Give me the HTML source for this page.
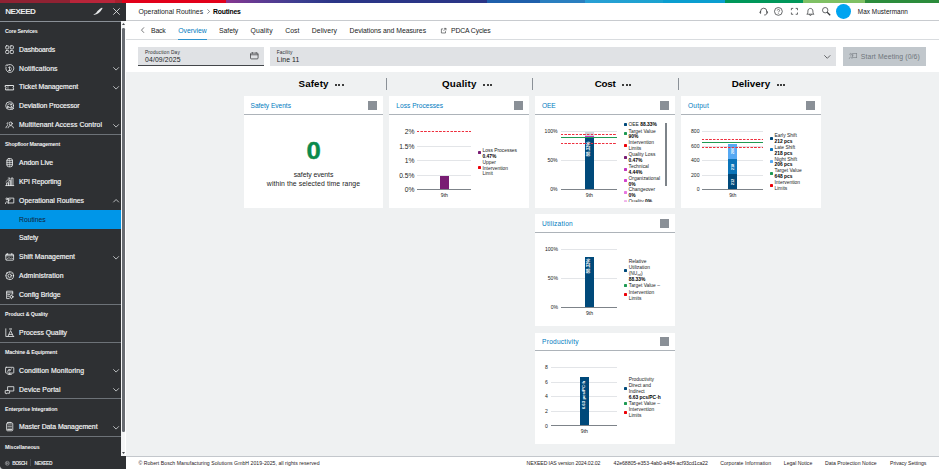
<!DOCTYPE html>
<html lang="en"><head><meta charset="utf-8"><title>Operational Routines - Routines</title>
<style>
html,body{margin:0;padding:0;}
body{width:939px;height:469px;overflow:hidden;position:relative;background:#fff;font-family:"Liberation Sans",sans-serif;-webkit-font-smoothing:antialiased;}
svg{overflow:visible;}
</style></head><body>
<div style="position:absolute;left:125.50px;top:71.75px;width:813.50px;height:384.50px;background:#eff1f2;"></div>
<div style="position:absolute;left:125.50px;top:20.20px;width:813.50px;height:0.90px;background:#c8cbcf;"></div>
<div style="position:absolute;left:125.50px;top:39.30px;width:813.50px;height:0.90px;background:#d9dcdf;"></div>
<div style="position:absolute;left:125.50px;top:456.10px;width:813.50px;height:0.80px;background:#c3c7cc;"></div>
<div style="position:absolute;left:0;top:0;width:939px;height:2.5px;background:linear-gradient(90deg,#8f2233 0,#8f2233 70px,#b8253a 70px,#b8253a 115px,#a81f2e 115px,#a81f2e 122px,#e2001a 122px,#e2001a 226px,#87368f 226px,#5d3b93 262px,#3b3e90 300px,#2a3587 335px,#2a3587 487px,#1f5fab 487px,#1f5fab 540px,#2a7fc0 540px,#2a7fc0 585px,#2a9fd5 585px,#1aa3d0 663px,#0b9ed0 663px,#0b9ed0 725px,#00975a 725px,#00975a 803px,#7fc064 803px,#7fc064 865px,#2c8c3c 865px,#2c8c3c 939px)"></div>
<aside aria-label="Sidebar">
<div style="position:absolute;left:0.00px;top:2.50px;width:125.70px;height:18.30px;background:#2e3033;"></div>
<div style="position:absolute;left:0.00px;top:20.80px;width:120.70px;height:435.20px;background:#2e3033;"></div>
<div style="position:absolute;left:0.00px;top:455.70px;width:125.50px;height:13.30px;background:#2e3033;"></div>
<div style="position:absolute;left:0.00px;top:20.70px;width:120.70px;height:0.80px;background:#8a9097;"></div>
<div style="position:absolute;left:120.70px;top:20.80px;width:4.80px;height:435.00px;background:#f4f5f6;"></div>
<div style="position:absolute;left:122.10px;top:28.20px;width:2.50px;height:404.00px;background:#686c72;border-radius:1.25px;"></div>
<svg style="position:absolute;left:121.60px;top:23.30px;" width="3" height="2" viewBox="0 0 3 2"><path d="M0 2 L1.5 0 L3 2 Z" fill="#43464a"/></svg>
<svg style="position:absolute;left:121.60px;top:451.50px;" width="3" height="2" viewBox="0 0 3 2"><path d="M0 0 L1.5 2 L3 0 Z" fill="#43464a"/></svg>
<span style="position:absolute;left:5.30px;top:6.64px;font-size:8.1px;line-height:9.72px;color:#e9ebec;white-space:nowrap;font-weight:bold;letter-spacing:-0.552px;">NEXEED</span>
<nav aria-label="Main navigation">
<svg style="position:absolute;left:92.80px;top:7.20px;" width="10" height="8.6" viewBox="0 0 10 8.6"><path d="M.3 7.4 C1.6 7.9 3.6 7.6 5 6.6 C6.8 5.3 8.6 3.4 9.4 1.6 C9.7 .9 9.1 .5 8.4 .9 C6.6 1.9 4.6 3.6 3.6 5.2 C3 6.2 2 6.9 .3 7.4 Z" fill="#e6e8ea"/></svg>
<svg style="position:absolute;left:112.90px;top:8.00px;" width="7.0" height="7.0" viewBox="0 0 7.0 7.0"><path d="M.3 .3 L6.7 6.7 M6.7 .3 L.3 6.7" stroke="#e6e8ea" stroke-width=".85" fill="none"/></svg>
<span style="position:absolute;left:5.00px;top:28.14px;font-size:5.3px;line-height:6.36px;color:#f2f3f4;white-space:nowrap;font-weight:bold;letter-spacing:-0.220px;">Core Services</span>
<span style="position:absolute;left:19.10px;top:45.69px;font-size:6.85px;line-height:8.22px;color:#f4f5f6;white-space:nowrap;letter-spacing:-0.094px;-webkit-text-stroke:0.18px #f4f5f6;">Dashboards</span>
<svg style="position:absolute;left:4.70px;top:44.80px;" width="9.4" height="9.4" viewBox="0 0 9.4 9.4"><g stroke="#eef0f1" stroke-width=".8" fill="none" stroke-linecap="round" stroke-linejoin="round"><rect x=".7" y=".8" width="3.1" height="3.1" rx=".7"/><rect x="5.3" y=".8" width="3.1" height="3.1" rx=".7"/><rect x=".7" y="5.4" width="3.1" height="3.1" rx=".7"/><rect x="5.3" y="5.4" width="3.1" height="3.1" rx=".7"/></g></svg>
<span style="position:absolute;left:19.10px;top:64.57px;font-size:6.85px;line-height:8.22px;color:#f4f5f6;white-space:nowrap;letter-spacing:0.091px;-webkit-text-stroke:0.18px #f4f5f6;">Notifications</span>
<svg style="position:absolute;left:4.70px;top:63.68px;" width="9.4" height="9.4" viewBox="0 0 9.4 9.4"><g stroke="#eef0f1" stroke-width=".8" fill="none" stroke-linecap="round" stroke-linejoin="round"><path d="M2.3 1.3 A4 4 0 1 1 1 3.2"/><path d="M.6 1.9 A2 2 0 0 1 2 .6"/><path d="M3.6 3.4 L4.5 2.8 V6.6 M3.6 6.6 H5.4"/><path d="M5.2 2.9 C6.9 3.2 6.9 6.2 5.6 6.6" stroke-width=".55"/></g></svg>
<svg style="position:absolute;left:112.60px;top:67.28px;" width="6.2" height="3.6" viewBox="0 0 6.2 3.6"><path d="M.3 .3 L3.1 3.1 L5.9 .3" stroke="#e6e8ea" stroke-width=".75" fill="none"/></svg>
<span style="position:absolute;left:19.10px;top:83.45px;font-size:6.85px;line-height:8.22px;color:#f4f5f6;white-space:nowrap;letter-spacing:-0.053px;-webkit-text-stroke:0.18px #f4f5f6;">Ticket Management</span>
<svg style="position:absolute;left:4.70px;top:82.56px;" width="9.4" height="9.4" viewBox="0 0 9.4 9.4"><g stroke="#eef0f1" stroke-width=".95" fill="none" stroke-linecap="round" stroke-linejoin="round"><path d="M.6 2.5 H8.6 V4 C7.8 4 7.8 5.4 8.6 5.4 V6.9 H.6 V5.4 C1.4 5.4 1.4 4 .6 4 Z"/><path d="M3 2.7 V3.4 M3 4.3 V5.1 M3 6 V6.7" stroke-width=".55"/></g></svg>
<svg style="position:absolute;left:112.60px;top:86.16px;" width="6.2" height="3.6" viewBox="0 0 6.2 3.6"><path d="M.3 .3 L3.1 3.1 L5.9 .3" stroke="#e6e8ea" stroke-width=".75" fill="none"/></svg>
<span style="position:absolute;left:19.10px;top:102.33px;font-size:6.85px;line-height:8.22px;color:#f4f5f6;white-space:nowrap;letter-spacing:-0.042px;-webkit-text-stroke:0.18px #f4f5f6;">Deviation Processor</span>
<svg style="position:absolute;left:4.70px;top:101.44px;" width="9.4" height="9.4" viewBox="0 0 9.4 9.4"><g stroke="#eef0f1" stroke-width=".8" fill="none" stroke-linecap="round" stroke-linejoin="round"><circle cx="4.6" cy="4.7" r="3.9"/><path d="M2.4 4.2 C2.9 2.6 5.6 2.2 6.6 3.8 M6.7 2.6 V3.9 H5.4"/><path d="M6.8 5.3 C6.3 6.9 3.6 7.2 2.6 5.7 M2.5 6.9 V5.6 H3.8"/><circle cx="7.2" cy="7.4" r="1.1" fill="#2e3033"/></g></svg>
<span style="position:absolute;left:19.10px;top:121.21px;font-size:6.85px;line-height:8.22px;color:#f4f5f6;white-space:nowrap;letter-spacing:0.073px;-webkit-text-stroke:0.18px #f4f5f6;">Multitenant Access Control</span>
<svg style="position:absolute;left:4.70px;top:120.32px;" width="9.4" height="9.4" viewBox="0 0 9.4 9.4"><g stroke="#eef0f1" stroke-width=".8" fill="none" stroke-linecap="round" stroke-linejoin="round"><circle cx="5.7" cy="3.6" r="1.55"/><path d="M3.1 7.8 C3.1 4.8 8.4 4.8 8.4 7.8"/><path d="M2.9 2.5 C1.8 2.7 1.7 4.1 2.7 4.5 M1 7.8 C1 6.5 1.6 5.8 2.6 5.6"/></g></svg>
<svg style="position:absolute;left:112.60px;top:123.92px;" width="6.2" height="3.6" viewBox="0 0 6.2 3.6"><path d="M.3 .3 L3.1 3.1 L5.9 .3" stroke="#e6e8ea" stroke-width=".75" fill="none"/></svg>
<div style="position:absolute;left:0.00px;top:134.16px;width:120.70px;height:0.80px;background:#6d7278;"></div>
<span style="position:absolute;left:5.00px;top:141.42px;font-size:5.3px;line-height:6.36px;color:#f2f3f4;white-space:nowrap;font-weight:bold;letter-spacing:-0.195px;">Shopfloor Management</span>
<span style="position:absolute;left:19.10px;top:158.97px;font-size:6.85px;line-height:8.22px;color:#f4f5f6;white-space:nowrap;letter-spacing:-0.028px;-webkit-text-stroke:0.18px #f4f5f6;">Andon Live</span>
<svg style="position:absolute;left:4.70px;top:158.08px;" width="9.4" height="9.4" viewBox="0 0 9.4 9.4"><g stroke="#eef0f1" stroke-width=".8" fill="none" stroke-linecap="round" stroke-linejoin="round"><rect x="1.9" y=".6" width="5.6" height="8.2" rx="1.9"/><path d="M1.9 2.7 H7.5 M1.9 4.7 H7.5 M1.9 6.7 H7.5"/><path d="M4.7 .7 V8.7" stroke-width=".5"/></g></svg>
<span style="position:absolute;left:19.10px;top:177.85px;font-size:6.85px;line-height:8.22px;color:#f4f5f6;white-space:nowrap;letter-spacing:-0.050px;-webkit-text-stroke:0.18px #f4f5f6;">KPI Reporting</span>
<svg style="position:absolute;left:4.70px;top:176.96px;" width="9.4" height="9.4" viewBox="0 0 9.4 9.4"><g stroke="#eef0f1" stroke-width=".8" fill="none" stroke-linecap="round" stroke-linejoin="round"><path d="M.7 8.6 H8.8"/><path d="M1.6 8.6 V5.9 H3.4 V8.6 M3.9 8.6 V3.6 H5.7 V8.6 M6.2 8.6 V1 H8 V8.6"/><path d="M.9 4.6 L4.6 1.2 M3.2 1 H4.8 V2.6" stroke-width=".6"/></g></svg>
<span style="position:absolute;left:19.10px;top:196.73px;font-size:6.85px;line-height:8.22px;color:#f4f5f6;white-space:nowrap;letter-spacing:0.032px;-webkit-text-stroke:0.18px #f4f5f6;">Operational Routines</span>
<svg style="position:absolute;left:4.70px;top:195.84px;" width="9.4" height="9.4" viewBox="0 0 9.4 9.4"><g stroke="#eef0f1" stroke-width=".8" fill="none" stroke-linecap="round" stroke-linejoin="round"><rect x="4" y="2.1" width="4.8" height="4.9"/><circle cx="1.9" cy="2.9" r=".95"/><path d="M.5 7.6 C.5 5 3.3 5 3.3 7.6 M3 4.8 L5.2 3.6"/></g></svg>
<svg style="position:absolute;left:112.60px;top:199.04px;" width="6.2" height="3.6" viewBox="0 0 6.2 3.6"><path d="M.3 3.3 L3.1 .5 L5.9 3.3" stroke="#e6e8ea" stroke-width=".75" fill="none"/></svg>
<div style="position:absolute;left:0.00px;top:209.78px;width:120.70px;height:18.88px;background:#0096e8;"></div>
<span style="position:absolute;left:19.10px;top:215.61px;font-size:6.85px;line-height:8.22px;color:#10253a;white-space:nowrap;letter-spacing:-0.067px;">Routines</span>
<span style="position:absolute;left:19.10px;top:234.49px;font-size:6.85px;line-height:8.22px;color:#f4f5f6;white-space:nowrap;letter-spacing:-0.070px;-webkit-text-stroke:0.18px #f4f5f6;">Safety</span>
<span style="position:absolute;left:19.10px;top:253.37px;font-size:6.85px;line-height:8.22px;color:#f4f5f6;white-space:nowrap;letter-spacing:0.025px;-webkit-text-stroke:0.18px #f4f5f6;">Shift Management</span>
<svg style="position:absolute;left:4.70px;top:252.48px;" width="9.4" height="9.4" viewBox="0 0 9.4 9.4"><g stroke="#eef0f1" stroke-width=".8" fill="none" stroke-linecap="round" stroke-linejoin="round"><rect x=".8" y="2.3" width="7.8" height="5.9" rx=".5"/><path d="M.8 3.8 H8.6 M2.6 1.5 V2.6 M6.8 1.5 V2.6"/><path d="M1.5 7.5 C2.6 5.4 4.6 5.6 5.6 6.6 C6.4 5.8 7.6 6 8.1 7" stroke-width=".6"/></g></svg>
<svg style="position:absolute;left:112.60px;top:256.08px;" width="6.2" height="3.6" viewBox="0 0 6.2 3.6"><path d="M.3 .3 L3.1 3.1 L5.9 .3" stroke="#e6e8ea" stroke-width=".75" fill="none"/></svg>
<span style="position:absolute;left:19.10px;top:272.25px;font-size:6.85px;line-height:8.22px;color:#f4f5f6;white-space:nowrap;letter-spacing:0.078px;-webkit-text-stroke:0.18px #f4f5f6;">Administration</span>
<svg style="position:absolute;left:4.70px;top:271.36px;" width="9.4" height="9.4" viewBox="0 0 9.4 9.4"><g stroke="#eef0f1" stroke-width=".8" fill="none" stroke-linecap="round" stroke-linejoin="round"><circle cx="4.7" cy="4.7" r="3.9"/><circle cx="4.7" cy="4.7" r="1.7"/><path d="M4.7 .8 V1.7 M4.7 7.7 V8.6 M.8 4.7 H1.7 M7.7 4.7 H8.6 M1.95 1.95 L2.6 2.6 M6.8 6.8 L7.45 7.45 M1.95 7.45 L2.6 6.8 M6.8 2.6 L7.45 1.95" stroke-width=".55"/></g></svg>
<span style="position:absolute;left:19.10px;top:291.13px;font-size:6.85px;line-height:8.22px;color:#f4f5f6;white-space:nowrap;-webkit-text-stroke:0.18px #f4f5f6;">Config Bridge</span>
<svg style="position:absolute;left:4.70px;top:290.24px;" width="9.4" height="9.4" viewBox="0 0 9.4 9.4"><g stroke="#eef0f1" stroke-width=".8" fill="none" stroke-linecap="round" stroke-linejoin="round"><path d="M7.7 4.2 V1.2 H1.6 V8.6 H4.2"/><path d="M1.6 2.9 H7.7 M2.7 4.6 H4.7 M2.7 6.2 H3.8" /><circle cx="6.5" cy="6.8" r="1.4"/><path d="M6.5 4.8 V5.4 M6.5 8.2 V8.8 M4.5 6.8 H5.1 M7.9 6.8 H8.5" stroke-width=".6"/></g></svg>
<div style="position:absolute;left:0.00px;top:304.08px;width:120.70px;height:0.80px;background:#6d7278;"></div>
<span style="position:absolute;left:5.00px;top:311.34px;font-size:5.3px;line-height:6.36px;color:#f2f3f4;white-space:nowrap;font-weight:bold;letter-spacing:-0.104px;">Product &amp; Quality</span>
<span style="position:absolute;left:19.10px;top:328.89px;font-size:6.85px;line-height:8.22px;color:#f4f5f6;white-space:nowrap;letter-spacing:0.002px;-webkit-text-stroke:0.18px #f4f5f6;">Process Quality</span>
<svg style="position:absolute;left:4.70px;top:328.00px;" width="9.4" height="9.4" viewBox="0 0 9.4 9.4"><g stroke="#eef0f1" stroke-width=".8" fill="none" stroke-linecap="round" stroke-linejoin="round"><path d="M.8 .8 V8.5 H8.8"/><path d="M3 8.4 L5.6 2.6 L8.3 8.4 M4 6.4 H7.2"/><path d="M4.6 1 H6.6" stroke-width=".9"/></g></svg>
<div style="position:absolute;left:0.00px;top:341.84px;width:120.70px;height:0.80px;background:#6d7278;"></div>
<span style="position:absolute;left:5.00px;top:349.10px;font-size:5.3px;line-height:6.36px;color:#f2f3f4;white-space:nowrap;font-weight:bold;letter-spacing:-0.177px;">Machine &amp; Equipment</span>
<span style="position:absolute;left:19.10px;top:366.65px;font-size:6.85px;line-height:8.22px;color:#f4f5f6;white-space:nowrap;letter-spacing:0.109px;-webkit-text-stroke:0.18px #f4f5f6;">Condition Monitoring</span>
<svg style="position:absolute;left:4.70px;top:365.76px;" width="9.4" height="9.4" viewBox="0 0 9.4 9.4"><g stroke="#eef0f1" stroke-width=".8" fill="none" stroke-linecap="round" stroke-linejoin="round"><rect x=".6" y="1.3" width="8.2" height="5.8" rx=".6"/><path d="M3 8.4 H6.4 M4.7 7.2 V8.3"/><path d="M2.6 5.6 L3.8 3.6 H5.4 L6.6 2.8" stroke-width=".6"/><circle cx="4.2" cy="4.4" r=".9" stroke-width=".5"/></g></svg>
<svg style="position:absolute;left:112.60px;top:369.36px;" width="6.2" height="3.6" viewBox="0 0 6.2 3.6"><path d="M.3 .3 L3.1 3.1 L5.9 .3" stroke="#e6e8ea" stroke-width=".75" fill="none"/></svg>
<span style="position:absolute;left:19.10px;top:385.53px;font-size:6.85px;line-height:8.22px;color:#f4f5f6;white-space:nowrap;letter-spacing:0.059px;-webkit-text-stroke:0.18px #f4f5f6;">Device Portal</span>
<svg style="position:absolute;left:4.70px;top:384.64px;" width="9.4" height="9.4" viewBox="0 0 9.4 9.4"><g stroke="#eef0f1" stroke-width=".8" fill="none" stroke-linecap="round" stroke-linejoin="round"><path d="M2.6 5.6 V1.7 H8.8 V6 H5.4"/><path d="M.6 5.6 H4.6 V8.2 H2.2 L1.2 8.9 V8.2 H.6 Z"/></g></svg>
<svg style="position:absolute;left:112.60px;top:388.24px;" width="6.2" height="3.6" viewBox="0 0 6.2 3.6"><path d="M.3 .3 L3.1 3.1 L5.9 .3" stroke="#e6e8ea" stroke-width=".75" fill="none"/></svg>
<div style="position:absolute;left:0.00px;top:398.48px;width:120.70px;height:0.80px;background:#6d7278;"></div>
<span style="position:absolute;left:5.00px;top:405.74px;font-size:5.3px;line-height:6.36px;color:#f2f3f4;white-space:nowrap;font-weight:bold;letter-spacing:-0.117px;">Enterprise Integration</span>
<span style="position:absolute;left:19.10px;top:423.29px;font-size:6.85px;line-height:8.22px;color:#f4f5f6;white-space:nowrap;letter-spacing:-0.032px;-webkit-text-stroke:0.18px #f4f5f6;">Master Data Management</span>
<svg style="position:absolute;left:4.70px;top:422.40px;" width="9.4" height="9.4" viewBox="0 0 9.4 9.4"><g stroke="#eef0f1" stroke-width=".8" fill="none" stroke-linecap="round" stroke-linejoin="round"><rect x="1.6" y=".9" width="6.2" height="7.9" rx="1"/><path d="M3.3 .9 V.4 H6.1 V.9"/><path d="M2.9 2.9 H6.5 M2.9 4.5 H6.5 M2.9 6.1 H6.5" stroke-width=".55"/><path d="M2.6 7.6 H6.8" stroke-width=".9"/></g></svg>
<svg style="position:absolute;left:112.60px;top:426.00px;" width="6.2" height="3.6" viewBox="0 0 6.2 3.6"><path d="M.3 .3 L3.1 3.1 L5.9 .3" stroke="#e6e8ea" stroke-width=".75" fill="none"/></svg>
<div style="position:absolute;left:0.00px;top:436.24px;width:120.70px;height:0.80px;background:#6d7278;"></div>
<span style="position:absolute;left:5.00px;top:443.50px;font-size:5.3px;line-height:6.36px;color:#f2f3f4;white-space:nowrap;font-weight:bold;letter-spacing:-0.133px;">Miscellaneous</span>
</nav>
<svg style="position:absolute;left:0.00px;top:466.20px;" width="3" height="2.8" viewBox="0 0 3 2.8"><path d="M0 0 Q.2 2.6 3 2.8 L0 2.8 Z" fill="#fff"/></svg>
<svg style="position:absolute;left:5.20px;top:460.60px;" width="4.6" height="4.6" viewBox="0 0 4.6 4.6"><circle cx="2.3" cy="2.3" r="2" stroke="#c9ccd0" stroke-width=".45" fill="none"/><path d="M1.5 1 V3.6 M3.1 1 V3.6 M1.5 2.3 H3.1" stroke="#c9ccd0" stroke-width=".45" fill="none"/></svg>
<span style="position:absolute;left:12.30px;top:460.56px;font-size:4.9px;line-height:5.88px;color:#e6e8ea;white-space:nowrap;font-weight:bold;letter-spacing:-0.659px;">BOSCH</span>
<div style="position:absolute;left:30.20px;top:459.30px;width:0.60px;height:6.80px;background:#4b4e53;"></div>
<span style="position:absolute;left:34.60px;top:460.56px;font-size:4.9px;line-height:5.88px;color:#e6e8ea;white-space:nowrap;font-weight:bold;letter-spacing:-0.459px;">NEXEED</span>
</aside>
<header>
<span style="position:absolute;left:138.40px;top:8.39px;font-size:6.85px;line-height:8.22px;color:#1a1c1d;white-space:nowrap;letter-spacing:0.022px;">Operational Routines</span>
<svg style="position:absolute;left:206.60px;top:9.30px;" width="3" height="5" viewBox="0 0 3 5"><path d="M.4 .4 L2.6 2.5 L.4 4.6" stroke="#43464a" stroke-width=".6" fill="none"/></svg>
<h1 style="position:absolute;left:213.00px;top:8.39px;font-size:6.85px;line-height:8.22px;color:#000;white-space:nowrap;font-weight:bold;letter-spacing:-0.213px;margin:0;font-weight:bold;">Routines</h1>
<svg style="position:absolute;left:758.60px;top:7.40px;" width="9.4" height="8.6" viewBox="0 0 9.4 8.6"><g stroke="#34373a" stroke-width=".75" fill="none"><path d="M1.6 5.2 V4.3 A3.1 3.1 0 0 1 7.8 4.3 V5.2"/><path d="M1.6 4.4 C.6 4.4 .6 6.4 1.6 6.4 Z M7.8 4.4 C8.8 4.4 8.8 6.4 7.8 6.4 Z"/><path d="M7.8 6.4 C7.8 7.6 6.6 8 5.2 8"/></g></svg>
<svg style="position:absolute;left:774.20px;top:7.20px;" width="8.8" height="8.8" viewBox="0 0 8.8 8.8"><g stroke="#34373a" stroke-width=".75" fill="none"><circle cx="4.4" cy="4.4" r="3.9"/><path d="M3.3 3.5 C3.3 2 5.6 2 5.6 3.5 C5.6 4.5 4.4 4.4 4.4 5.4" stroke-width=".65"/><path d="M4.4 6.1 V6.8" stroke-width=".65"/></g></svg>
<svg style="position:absolute;left:791.00px;top:8.30px;" width="6.9" height="6.7" viewBox="0 0 6.9 6.7"><g stroke="#34373a" stroke-width=".75" fill="none"><path d="M.4 2.2 V.4 H2.2 M4.7 .4 H6.5 V2.2 M6.5 4.5 V6.3 H4.7 M2.2 6.3 H.4 V4.5"/></g></svg>
<svg style="position:absolute;left:805.60px;top:7.00px;" width="8.8" height="9.2" viewBox="0 0 8.8 9.2"><g stroke="#34373a" stroke-width=".75" fill="none"><path d="M.8 7.2 H8 C6.9 6.3 6.9 5.4 6.9 4 C6.9 .6 1.9 .6 1.9 4 C1.9 5.4 1.9 6.3 .8 7.2 Z"/><path d="M3.4 7.4 C3.4 8.8 5.4 8.8 5.4 7.4"/></g></svg>
<svg style="position:absolute;left:821.60px;top:7.20px;" width="8.8" height="8.8" viewBox="0 0 8.8 8.8"><g stroke="#34373a" stroke-width=".75" fill="none"><circle cx="3.2" cy="3.2" r="2.7"/><path d="M5.2 5.2 L8.2 8.2" stroke-width="1.3"/></g></svg>
<div style="position:absolute;left:835.8px;top:4.0px;width:14.8px;height:14.8px;border-radius:50%;background:#00a4f0"></div>
<span style="position:absolute;left:857.80px;top:7.56px;font-size:6.4px;line-height:7.68px;color:#101112;white-space:nowrap;letter-spacing:0.054px;">Max Mustermann</span>
</header>
<nav aria-label="Tabs">
<svg style="position:absolute;left:141.20px;top:27.40px;" width="3.4" height="6.2" viewBox="0 0 3.4 6.2"><path d="M3 .4 L.5 3.1 L3 5.8" stroke="#2e3033" stroke-width=".65" fill="none"/></svg>
<span style="position:absolute;left:151.00px;top:27.19px;font-size:6.85px;line-height:8.22px;color:#1a1c1d;white-space:nowrap;letter-spacing:-0.157px;">Back</span>
<span style="position:absolute;left:178.20px;top:27.19px;font-size:6.85px;line-height:8.22px;color:#007bc0;white-space:nowrap;letter-spacing:-0.006px;">Overview</span>
<div style="position:absolute;left:178.20px;top:38.75px;width:28.40px;height:0.95px;background:#2f93cd;"></div>
<span style="position:absolute;left:219.00px;top:27.19px;font-size:6.85px;line-height:8.22px;color:#1a1c1d;white-space:nowrap;letter-spacing:-0.037px;">Safety</span>
<span style="position:absolute;left:250.50px;top:27.19px;font-size:6.85px;line-height:8.22px;color:#1a1c1d;white-space:nowrap;letter-spacing:0.126px;">Quality</span>
<span style="position:absolute;left:285.20px;top:27.19px;font-size:6.85px;line-height:8.22px;color:#1a1c1d;white-space:nowrap;letter-spacing:0.029px;">Cost</span>
<span style="position:absolute;left:311.80px;top:27.19px;font-size:6.85px;line-height:8.22px;color:#1a1c1d;white-space:nowrap;letter-spacing:0.057px;">Delivery</span>
<span style="position:absolute;left:349.50px;top:27.19px;font-size:6.85px;line-height:8.22px;color:#1a1c1d;white-space:nowrap;letter-spacing:-0.030px;">Deviations and Measures</span>
<svg style="position:absolute;left:440.60px;top:27.60px;" width="5.4" height="5.4" viewBox="0 0 5.4 5.4"><g stroke="#2e3033" stroke-width=".6" fill="none"><path d="M2.2 .9 H.4 V5 H4.5 V3.2"/><path d="M3 .4 H5 V2.4 M5 .4 L2.6 2.8"/></g></svg>
<span style="position:absolute;left:451.00px;top:27.19px;font-size:6.85px;line-height:8.22px;color:#1a1c1d;white-space:nowrap;letter-spacing:-0.137px;">PDCA Cycles</span>
</nav>
<main>
<div role="toolbar">
<div style="position:absolute;left:138.40px;top:46.90px;width:125.80px;height:18.70px;background:#e0e2e5;"></div>
<div style="position:absolute;left:138.40px;top:65.00px;width:125.80px;height:0.80px;background:#43464a;"></div>
<span style="position:absolute;left:145.00px;top:49.92px;font-size:4.8px;line-height:5.76px;color:#2e3033;white-space:nowrap;letter-spacing:0.156px;">Production Day</span>
<span style="position:absolute;left:145.00px;top:56.09px;font-size:6.85px;line-height:8.22px;color:#1a1c1d;white-space:nowrap;letter-spacing:0.132px;">04/09/2025</span>
<svg style="position:absolute;left:250.40px;top:52.20px;" width="8.6" height="7.4" viewBox="0 0 8.6 7.4"><g stroke="#2e3033" stroke-width=".7" fill="none"><rect x=".5" y="1.1" width="7.6" height="5.8" rx=".9"/><path d="M.5 2.8 H8.1 M2.4 .2 V1.6 M6.2 .2 V1.6"/></g></svg>
<div style="position:absolute;left:270.20px;top:46.90px;width:565.80px;height:18.70px;background:#e0e2e5;"></div>
<span style="position:absolute;left:276.80px;top:49.92px;font-size:4.8px;line-height:5.76px;color:#2e3033;white-space:nowrap;letter-spacing:0.083px;">Facility</span>
<span style="position:absolute;left:276.80px;top:56.09px;font-size:6.85px;line-height:8.22px;color:#1a1c1d;white-space:nowrap;letter-spacing:0.091px;">Line 11</span>
<svg style="position:absolute;left:823.60px;top:55.00px;" width="6.6" height="3.8" viewBox="0 0 6.6 3.8"><path d="M.3 .3 L3.3 3.3 L6.3 .3" stroke="#2e3033" stroke-width=".7" fill="none"/></svg>
<div style="position:absolute;left:843.00px;top:46.90px;width:83.20px;height:18.70px;background:#c1c7cc;"></div>
<svg style="position:absolute;left:848.80px;top:53.20px;" width="8.0" height="6.2" viewBox="0 0 8.0 6.2"><g stroke="#7d8389" stroke-width=".65" fill="none"><rect x="3.7" y=".5" width="4" height="4.2"/><circle cx="1.7" cy="1.3" r=".9"/><path d="M.3 5.9 C.3 3.5 3 3.5 3 5.9 M2.7 3.1 L4.6 2.1"/></g></svg>
<span style="position:absolute;left:860.80px;top:53.09px;font-size:6.85px;line-height:8.22px;color:#6f757b;white-space:nowrap;letter-spacing:0.130px;">Start Meeting (0/6)</span>
</div>
<h2 style="position:absolute;left:298.55px;top:77.92px;font-size:9.8px;line-height:11.76px;color:#000;white-space:nowrap;font-weight:bold;letter-spacing:0.097px;margin:0;font-weight:bold;">Safety</h2>
<div style="position:absolute;left:335.15px;top:83.60px;width:2.00px;height:2.00px;background:#000;border-radius:50%;"></div>
<div style="position:absolute;left:338.45px;top:83.60px;width:2.00px;height:2.00px;background:#000;border-radius:50%;"></div>
<div style="position:absolute;left:341.75px;top:83.60px;width:2.00px;height:2.00px;background:#000;border-radius:50%;"></div>
<div style="position:absolute;left:386.15px;top:78.20px;width:0.70px;height:11.60px;background:#8a9097;"></div>
<h2 style="position:absolute;left:442.05px;top:77.92px;font-size:9.8px;line-height:11.76px;color:#000;white-space:nowrap;font-weight:bold;letter-spacing:0.197px;margin:0;font-weight:bold;">Quality</h2>
<div style="position:absolute;left:483.25px;top:83.60px;width:2.00px;height:2.00px;background:#000;border-radius:50%;"></div>
<div style="position:absolute;left:486.55px;top:83.60px;width:2.00px;height:2.00px;background:#000;border-radius:50%;"></div>
<div style="position:absolute;left:489.85px;top:83.60px;width:2.00px;height:2.00px;background:#000;border-radius:50%;"></div>
<div style="position:absolute;left:531.95px;top:78.20px;width:0.70px;height:11.60px;background:#8a9097;"></div>
<h2 style="position:absolute;left:594.65px;top:77.92px;font-size:9.8px;line-height:11.76px;color:#000;white-space:nowrap;font-weight:bold;letter-spacing:-0.195px;margin:0;font-weight:bold;">Cost</h2>
<div style="position:absolute;left:622.25px;top:83.60px;width:2.00px;height:2.00px;background:#000;border-radius:50%;"></div>
<div style="position:absolute;left:625.55px;top:83.60px;width:2.00px;height:2.00px;background:#000;border-radius:50%;"></div>
<div style="position:absolute;left:628.85px;top:83.60px;width:2.00px;height:2.00px;background:#000;border-radius:50%;"></div>
<div style="position:absolute;left:677.75px;top:78.20px;width:0.70px;height:11.60px;background:#8a9097;"></div>
<h2 style="position:absolute;left:731.65px;top:77.92px;font-size:9.8px;line-height:11.76px;color:#000;white-space:nowrap;font-weight:bold;letter-spacing:0.058px;margin:0;font-weight:bold;">Delivery</h2>
<div style="position:absolute;left:776.85px;top:83.60px;width:2.00px;height:2.00px;background:#000;border-radius:50%;"></div>
<div style="position:absolute;left:780.15px;top:83.60px;width:2.00px;height:2.00px;background:#000;border-radius:50%;"></div>
<div style="position:absolute;left:783.45px;top:83.60px;width:2.00px;height:2.00px;background:#000;border-radius:50%;"></div>
<section>
<div style="position:absolute;left:243.60px;top:96.30px;width:139.90px;height:111.40px;background:#fff;"></div>
<div style="position:absolute;left:243.60px;top:114.20px;width:139.90px;height:1.00px;background:#adb3b9;"></div>
<h3 style="position:absolute;left:250.50px;top:101.94px;font-size:6.6px;line-height:7.92px;color:#007bc0;white-space:nowrap;letter-spacing:-0.017px;margin:0;font-weight:normal;">Safety Events</h3>
<div style="position:absolute;left:368.20px;top:101.10px;width:9.20px;height:9.10px;background:#8a9097;"></div>
<span style="position:absolute;left:306.99px;top:137.24px;font-size:23.6px;line-height:28.32px;color:#0a8a4c;white-space:nowrap;font-weight:bold;-webkit-text-stroke:0.4px #0a8a4c;transform:scaleX(1.09);">0</span>
<span style="position:absolute;left:293.75px;top:170.99px;font-size:6.85px;line-height:8.22px;color:#1a1c1d;white-space:nowrap;letter-spacing:-0.059px;">safety events</span>
<span style="position:absolute;left:266.85px;top:179.99px;font-size:6.85px;line-height:8.22px;color:#1a1c1d;white-space:nowrap;letter-spacing:0.093px;">within the selected time range</span>
</section>
<section>
<div style="position:absolute;left:389.40px;top:96.30px;width:139.90px;height:111.40px;background:#fff;"></div>
<div style="position:absolute;left:389.40px;top:114.20px;width:139.90px;height:1.00px;background:#adb3b9;"></div>
<h3 style="position:absolute;left:396.30px;top:101.94px;font-size:6.6px;line-height:7.92px;color:#007bc0;white-space:nowrap;letter-spacing:0.015px;margin:0;font-weight:normal;">Loss Processes</h3>
<div style="position:absolute;left:514.00px;top:101.10px;width:9.20px;height:9.10px;background:#8a9097;"></div>
<span style="position:absolute;left:404.72px;top:128.08px;font-size:6.7px;line-height:8.04px;color:#1a1c1d;white-space:nowrap;">2%</span>
<span style="position:absolute;left:399.13px;top:142.68px;font-size:6.7px;line-height:8.04px;color:#1a1c1d;white-space:nowrap;">1.5%</span>
<span style="position:absolute;left:404.72px;top:157.08px;font-size:6.7px;line-height:8.04px;color:#1a1c1d;white-space:nowrap;">1%</span>
<span style="position:absolute;left:399.13px;top:171.68px;font-size:6.7px;line-height:8.04px;color:#1a1c1d;white-space:nowrap;">0.5%</span>
<span style="position:absolute;left:404.72px;top:186.18px;font-size:6.7px;line-height:8.04px;color:#1a1c1d;white-space:nowrap;">0%</span>
<div style="position:absolute;left:417.20px;top:145.70px;width:54.00px;height:0.60px;background:#e3e5e8;"></div>
<div style="position:absolute;left:417.20px;top:160.10px;width:54.00px;height:0.60px;background:#e3e5e8;"></div>
<div style="position:absolute;left:417.20px;top:174.70px;width:54.00px;height:0.60px;background:#e3e5e8;"></div>
<div style="position:absolute;left:417.20px;top:130.95px;width:54.00px;height:0.9px;background:repeating-linear-gradient(90deg,#ee2f3e 0,#ee2f3e 1.9px,transparent 2.5px,transparent 3.15px,#ee2f3e 3.75px)"></div>
<div style="position:absolute;left:439.50px;top:176.40px;width:9.50px;height:13.10px;background:#791d73;"></div>
<div style="position:absolute;left:417.20px;top:189.20px;width:54.00px;height:0.80px;background:#7d8389;"></div>
<span style="position:absolute;left:440.79px;top:192.08px;font-size:5.2px;line-height:6.24px;color:#1a1c1d;white-space:nowrap;">9th</span>
<div style="position:absolute;left:478.00px;top:151.00px;width:2.70px;height:2.50px;background:#791d73;border-radius:.4px;"></div>
<span style="position:absolute;left:482.50px;top:147.76px;font-size:4.9px;line-height:5.88px;color:#1a1c1d;white-space:nowrap;">Loss Processes</span>
<span style="position:absolute;left:482.50px;top:153.61px;font-size:4.9px;line-height:5.88px;color:#000;white-space:nowrap;font-weight:bold;">0.47%</span>
<div style="position:absolute;left:478.00px;top:166.00px;width:2.70px;height:2.50px;background:#ed0007;border-radius:.4px;"></div>
<span style="position:absolute;left:482.50px;top:159.66px;font-size:4.9px;line-height:5.88px;color:#1a1c1d;white-space:nowrap;">Upper</span>
<span style="position:absolute;left:482.50px;top:165.51px;font-size:4.9px;line-height:5.88px;color:#1a1c1d;white-space:nowrap;">Intervention</span>
<span style="position:absolute;left:482.50px;top:171.36px;font-size:4.9px;line-height:5.88px;color:#1a1c1d;white-space:nowrap;">Limit</span>
</section>
<section>
<div style="position:absolute;left:535.20px;top:96.30px;width:139.90px;height:111.40px;background:#fff;"></div>
<div style="position:absolute;left:535.20px;top:114.20px;width:139.90px;height:1.00px;background:#adb3b9;"></div>
<h3 style="position:absolute;left:542.10px;top:101.94px;font-size:6.6px;line-height:7.92px;color:#007bc0;white-space:nowrap;letter-spacing:-0.246px;margin:0;font-weight:normal;">OEE</h3>
<div style="position:absolute;left:659.80px;top:101.10px;width:9.20px;height:9.10px;background:#8a9097;"></div>
<span style="position:absolute;left:544.56px;top:128.34px;font-size:5.1px;line-height:6.12px;color:#1a1c1d;white-space:nowrap;">100%</span>
<span style="position:absolute;left:547.39px;top:157.34px;font-size:5.1px;line-height:6.12px;color:#1a1c1d;white-space:nowrap;">50%</span>
<span style="position:absolute;left:550.23px;top:186.44px;font-size:5.1px;line-height:6.12px;color:#1a1c1d;white-space:nowrap;">0%</span>
<div style="position:absolute;left:560.70px;top:131.10px;width:56.30px;height:0.60px;background:#e3e5e8;"></div>
<div style="position:absolute;left:560.70px;top:160.10px;width:56.30px;height:0.60px;background:#e3e5e8;"></div>
<div style="position:absolute;left:584.50px;top:131.70px;width:9.50px;height:4.00px;background:#d3d6dc;"></div>
<div style="position:absolute;left:584.50px;top:135.60px;width:9.50px;height:2.50px;background:#c535bc;"></div>
<div style="position:absolute;left:584.50px;top:138.00px;width:9.50px;height:51.50px;background:#00497a;"></div>
<div style="position:absolute;left:560.70px;top:133.75px;width:56.30px;height:0.9px;background:repeating-linear-gradient(90deg,#ee2f3e 0,#ee2f3e 1.9px,transparent 2.5px,transparent 3.15px,#ee2f3e 3.75px)"></div>
<div style="position:absolute;left:560.70px;top:143.05px;width:56.30px;height:0.9px;background:repeating-linear-gradient(90deg,#ee2f3e 0,#ee2f3e 1.9px,transparent 2.5px,transparent 3.15px,#ee2f3e 3.75px)"></div>
<div style="position:absolute;left:560.70px;top:137.20px;width:56.30px;height:0.80px;background:#1e9a52;"></div>
<div style="position:absolute;left:560.70px;top:189.20px;width:56.30px;height:0.80px;background:#7d8389;"></div>
<span style="position:absolute;left:589.30px;top:149.40px;font-size:4.45px;line-height:1;font-weight:bold;color:#fff;white-space:nowrap;transform:translate(-50%,-50%) rotate(-90deg);">88.33%</span>
<span style="position:absolute;left:585.79px;top:192.08px;font-size:5.2px;line-height:6.24px;color:#1a1c1d;white-space:nowrap;">9th</span>
<div style="position:absolute;left:620px;top:120.5px;width:50px;height:81px;overflow:hidden"><div style="position:absolute;left:-620px;top:-120.5px">
<div style="position:absolute;left:624.00px;top:123.00px;width:2.70px;height:2.50px;background:#00497a;border-radius:.4px;"></div>
<span style="position:absolute;left:628.50px;top:122.36px;font-size:4.9px;line-height:5.88px;color:#1a1c1d;white-space:nowrap;">OEE</span>
<span style="position:absolute;left:640.21px;top:122.36px;font-size:4.9px;line-height:5.88px;color:#000;white-space:nowrap;font-weight:bold;">88.33%</span>
<div style="position:absolute;left:624.00px;top:132.00px;width:2.70px;height:2.50px;background:#1e9a52;border-radius:.4px;"></div>
<span style="position:absolute;left:628.50px;top:128.56px;font-size:4.9px;line-height:5.88px;color:#1a1c1d;white-space:nowrap;">Target Value</span>
<span style="position:absolute;left:628.50px;top:134.41px;font-size:4.9px;line-height:5.88px;color:#000;white-space:nowrap;font-weight:bold;">90%</span>
<div style="position:absolute;left:624.00px;top:144.00px;width:2.70px;height:2.50px;background:#ed0007;border-radius:.4px;"></div>
<span style="position:absolute;left:628.50px;top:140.26px;font-size:4.9px;line-height:5.88px;color:#1a1c1d;white-space:nowrap;">Intervention</span>
<span style="position:absolute;left:628.50px;top:146.11px;font-size:4.9px;line-height:5.88px;color:#1a1c1d;white-space:nowrap;">Limits</span>
<div style="position:absolute;left:624.00px;top:156.00px;width:2.70px;height:2.50px;background:#791d73;border-radius:.4px;"></div>
<span style="position:absolute;left:628.50px;top:152.06px;font-size:4.9px;line-height:5.88px;color:#1a1c1d;white-space:nowrap;">Quality Loss</span>
<span style="position:absolute;left:628.50px;top:157.91px;font-size:4.9px;line-height:5.88px;color:#000;white-space:nowrap;font-weight:bold;">0.47%</span>
<div style="position:absolute;left:624.00px;top:168.00px;width:2.70px;height:2.50px;background:#c535bc;border-radius:.4px;"></div>
<span style="position:absolute;left:628.50px;top:163.86px;font-size:4.9px;line-height:5.88px;color:#1a1c1d;white-space:nowrap;">Technical</span>
<span style="position:absolute;left:628.50px;top:169.71px;font-size:4.9px;line-height:5.88px;color:#000;white-space:nowrap;font-weight:bold;">4.44%</span>
<div style="position:absolute;left:624.00px;top:179.00px;width:2.70px;height:2.50px;background:#d543cb;border-radius:.4px;"></div>
<span style="position:absolute;left:628.50px;top:175.66px;font-size:4.9px;line-height:5.88px;color:#1a1c1d;white-space:nowrap;">Organizational</span>
<span style="position:absolute;left:628.50px;top:181.51px;font-size:4.9px;line-height:5.88px;color:#000;white-space:nowrap;font-weight:bold;">0%</span>
<div style="position:absolute;left:624.00px;top:191.00px;width:2.70px;height:2.50px;background:#e878e0;border-radius:.4px;"></div>
<span style="position:absolute;left:628.50px;top:187.46px;font-size:4.9px;line-height:5.88px;color:#1a1c1d;white-space:nowrap;">Changeover</span>
<span style="position:absolute;left:628.50px;top:193.31px;font-size:4.9px;line-height:5.88px;color:#000;white-space:nowrap;font-weight:bold;">0%</span>
<div style="position:absolute;left:624.00px;top:200.00px;width:2.70px;height:2.50px;background:#f0b5eb;border-radius:.4px;"></div>
<span style="position:absolute;left:628.50px;top:199.16px;font-size:4.9px;line-height:5.88px;color:#1a1c1d;white-space:nowrap;">Quality</span>
<span style="position:absolute;left:645.11px;top:199.16px;font-size:4.9px;line-height:5.88px;color:#000;white-space:nowrap;font-weight:bold;">0%</span>
</div></div>
<div style="position:absolute;left:665.10px;top:123.20px;width:1.50px;height:63.00px;background:#7d8389;"></div>
</section>
<section>
<div style="position:absolute;left:681.00px;top:96.30px;width:139.90px;height:111.40px;background:#fff;"></div>
<div style="position:absolute;left:681.00px;top:114.20px;width:139.90px;height:1.00px;background:#adb3b9;"></div>
<h3 style="position:absolute;left:687.90px;top:101.94px;font-size:6.6px;line-height:7.92px;color:#007bc0;white-space:nowrap;letter-spacing:0.231px;margin:0;font-weight:normal;">Output</h3>
<div style="position:absolute;left:805.60px;top:101.10px;width:9.20px;height:9.10px;background:#8a9097;"></div>
<span style="position:absolute;left:690.99px;top:128.34px;font-size:5.1px;line-height:6.12px;color:#1a1c1d;white-space:nowrap;">800</span>
<span style="position:absolute;left:690.99px;top:142.84px;font-size:5.1px;line-height:6.12px;color:#1a1c1d;white-space:nowrap;">600</span>
<span style="position:absolute;left:690.99px;top:157.34px;font-size:5.1px;line-height:6.12px;color:#1a1c1d;white-space:nowrap;">400</span>
<span style="position:absolute;left:690.99px;top:171.94px;font-size:5.1px;line-height:6.12px;color:#1a1c1d;white-space:nowrap;">200</span>
<span style="position:absolute;left:696.66px;top:186.44px;font-size:5.1px;line-height:6.12px;color:#1a1c1d;white-space:nowrap;">0</span>
<div style="position:absolute;left:702.40px;top:131.10px;width:60.60px;height:0.60px;background:#e3e5e8;"></div>
<div style="position:absolute;left:702.40px;top:145.60px;width:60.60px;height:0.60px;background:#e3e5e8;"></div>
<div style="position:absolute;left:702.40px;top:160.10px;width:60.60px;height:0.60px;background:#e3e5e8;"></div>
<div style="position:absolute;left:702.40px;top:174.70px;width:60.60px;height:0.60px;background:#e3e5e8;"></div>
<div style="position:absolute;left:728.20px;top:174.20px;width:9.30px;height:15.30px;background:#00497a;"></div>
<div style="position:absolute;left:728.20px;top:158.80px;width:9.30px;height:15.50px;background:#0a74b9;"></div>
<div style="position:absolute;left:728.20px;top:143.60px;width:9.30px;height:15.30px;background:#56a9f3;"></div>
<div style="position:absolute;left:702.40px;top:139.15px;width:60.60px;height:0.9px;background:repeating-linear-gradient(90deg,#ee2f3e 0,#ee2f3e 1.9px,transparent 2.5px,transparent 3.15px,#ee2f3e 3.75px)"></div>
<div style="position:absolute;left:702.40px;top:147.05px;width:60.60px;height:0.9px;background:repeating-linear-gradient(90deg,#ee2f3e 0,#ee2f3e 1.9px,transparent 2.5px,transparent 3.15px,#ee2f3e 3.75px)"></div>
<div style="position:absolute;left:702.40px;top:142.00px;width:60.60px;height:0.80px;background:#1e9a52;"></div>
<div style="position:absolute;left:702.40px;top:189.20px;width:60.60px;height:0.80px;background:#7d8389;"></div>
<span style="position:absolute;left:732.90px;top:181.90px;font-size:4.0px;line-height:1;font-weight:bold;color:#fff;white-space:nowrap;transform:translate(-50%,-50%) rotate(-90deg);">212</span>
<span style="position:absolute;left:732.90px;top:166.60px;font-size:4.0px;line-height:1;font-weight:bold;color:#fff;white-space:nowrap;transform:translate(-50%,-50%) rotate(-90deg);">218</span>
<span style="position:absolute;left:732.90px;top:151.30px;font-size:4.0px;line-height:1;font-weight:bold;color:#fff;white-space:nowrap;transform:translate(-50%,-50%) rotate(-90deg);">206</span>
<span style="position:absolute;left:729.19px;top:192.08px;font-size:5.2px;line-height:6.24px;color:#1a1c1d;white-space:nowrap;">9th</span>
<div style="position:absolute;left:770.00px;top:137.00px;width:2.70px;height:2.50px;background:#00497a;border-radius:.4px;"></div>
<span style="position:absolute;left:774.50px;top:132.96px;font-size:4.9px;line-height:5.88px;color:#1a1c1d;white-space:nowrap;">Early Shift</span>
<span style="position:absolute;left:774.50px;top:138.81px;font-size:4.9px;line-height:5.88px;color:#000;white-space:nowrap;font-weight:bold;">212 pcs</span>
<div style="position:absolute;left:770.00px;top:148.00px;width:2.70px;height:2.50px;background:#0a74b9;border-radius:.4px;"></div>
<span style="position:absolute;left:774.50px;top:144.76px;font-size:4.9px;line-height:5.88px;color:#1a1c1d;white-space:nowrap;">Late Shift</span>
<span style="position:absolute;left:774.50px;top:150.61px;font-size:4.9px;line-height:5.88px;color:#000;white-space:nowrap;font-weight:bold;">218 pcs</span>
<div style="position:absolute;left:770.00px;top:160.00px;width:2.70px;height:2.50px;background:#56a9f3;border-radius:.4px;"></div>
<span style="position:absolute;left:774.50px;top:156.56px;font-size:4.9px;line-height:5.88px;color:#1a1c1d;white-space:nowrap;">Night Shift</span>
<span style="position:absolute;left:774.50px;top:162.41px;font-size:4.9px;line-height:5.88px;color:#000;white-space:nowrap;font-weight:bold;">206 pcs</span>
<div style="position:absolute;left:770.00px;top:172.00px;width:2.70px;height:2.50px;background:#1e9a52;border-radius:.4px;"></div>
<span style="position:absolute;left:774.50px;top:168.36px;font-size:4.9px;line-height:5.88px;color:#1a1c1d;white-space:nowrap;">Target Value</span>
<span style="position:absolute;left:774.50px;top:174.21px;font-size:4.9px;line-height:5.88px;color:#000;white-space:nowrap;font-weight:bold;">648 pcs</span>
<div style="position:absolute;left:770.00px;top:184.00px;width:2.70px;height:2.50px;background:#ed0007;border-radius:.4px;"></div>
<span style="position:absolute;left:774.50px;top:180.26px;font-size:4.9px;line-height:5.88px;color:#1a1c1d;white-space:nowrap;">Intervention</span>
<span style="position:absolute;left:774.50px;top:186.11px;font-size:4.9px;line-height:5.88px;color:#1a1c1d;white-space:nowrap;">Limits</span>
</section>
<section>
<div style="position:absolute;left:535.20px;top:214.40px;width:139.90px;height:111.40px;background:#fff;"></div>
<div style="position:absolute;left:535.20px;top:232.30px;width:139.90px;height:1.00px;background:#adb3b9;"></div>
<h3 style="position:absolute;left:542.10px;top:220.04px;font-size:6.6px;line-height:7.92px;color:#007bc0;white-space:nowrap;letter-spacing:0.199px;margin:0;font-weight:normal;">Utilization</h3>
<div style="position:absolute;left:659.80px;top:219.20px;width:9.20px;height:9.10px;background:#8a9097;"></div>
<span style="position:absolute;left:544.96px;top:246.04px;font-size:5.1px;line-height:6.12px;color:#1a1c1d;white-space:nowrap;">100%</span>
<span style="position:absolute;left:547.79px;top:275.14px;font-size:5.1px;line-height:6.12px;color:#1a1c1d;white-space:nowrap;">50%</span>
<span style="position:absolute;left:550.63px;top:304.24px;font-size:5.1px;line-height:6.12px;color:#1a1c1d;white-space:nowrap;">0%</span>
<div style="position:absolute;left:561.20px;top:248.80px;width:56.00px;height:0.60px;background:#e3e5e8;"></div>
<div style="position:absolute;left:561.20px;top:277.90px;width:56.00px;height:0.60px;background:#e3e5e8;"></div>
<div style="position:absolute;left:584.70px;top:256.60px;width:9.40px;height:50.80px;background:#00497a;"></div>
<div style="position:absolute;left:561.20px;top:307.10px;width:56.00px;height:0.80px;background:#7d8389;"></div>
<span style="position:absolute;left:589.40px;top:266.00px;font-size:4.45px;line-height:1;font-weight:bold;color:#fff;white-space:nowrap;transform:translate(-50%,-50%) rotate(-90deg);">88.33%</span>
<span style="position:absolute;left:585.89px;top:309.98px;font-size:5.2px;line-height:6.24px;color:#1a1c1d;white-space:nowrap;">9th</span>
<div style="position:absolute;left:624.00px;top:269.00px;width:2.70px;height:2.50px;background:#00497a;border-radius:.4px;"></div>
<span style="position:absolute;left:628.70px;top:259.16px;font-size:4.9px;line-height:5.88px;color:#1a1c1d;white-space:nowrap;">Relative</span>
<span style="position:absolute;left:628.70px;top:265.11px;font-size:4.9px;line-height:5.88px;color:#1a1c1d;white-space:nowrap;">Utilization</span>
<span style="position:absolute;left:628.70px;top:271.06px;font-size:4.9px;line-height:5.88px;color:#1a1c1d;white-space:nowrap;">(NU<sub style="font-size:3.3px;vertical-align:-1.1px;line-height:0">rel</sub>)</span>
<span style="position:absolute;left:628.70px;top:277.01px;font-size:4.9px;line-height:5.88px;color:#000;white-space:nowrap;font-weight:bold;">88.33%</span>
<div style="position:absolute;left:624.00px;top:284.00px;width:2.70px;height:2.50px;background:#1e9a52;border-radius:.4px;"></div>
<span style="position:absolute;left:628.70px;top:283.16px;font-size:4.9px;line-height:5.88px;color:#1a1c1d;white-space:nowrap;">Target Value –</span>
<div style="position:absolute;left:624.00px;top:293.00px;width:2.70px;height:2.50px;background:#ed0007;border-radius:.4px;"></div>
<span style="position:absolute;left:628.70px;top:289.76px;font-size:4.9px;line-height:5.88px;color:#1a1c1d;white-space:nowrap;">Intervention</span>
<span style="position:absolute;left:628.70px;top:295.71px;font-size:4.9px;line-height:5.88px;color:#1a1c1d;white-space:nowrap;">Limits</span>
</section>
<section>
<div style="position:absolute;left:535.20px;top:332.50px;width:139.90px;height:111.40px;background:#fff;"></div>
<div style="position:absolute;left:535.20px;top:350.40px;width:139.90px;height:1.00px;background:#adb3b9;"></div>
<h3 style="position:absolute;left:542.10px;top:338.14px;font-size:6.6px;line-height:7.92px;color:#007bc0;white-space:nowrap;letter-spacing:0.224px;margin:0;font-weight:normal;">Productivity</h3>
<div style="position:absolute;left:659.80px;top:337.30px;width:9.20px;height:9.10px;background:#8a9097;"></div>
<span style="position:absolute;left:545.06px;top:364.14px;font-size:5.1px;line-height:6.12px;color:#1a1c1d;white-space:nowrap;">8</span>
<span style="position:absolute;left:545.06px;top:378.74px;font-size:5.1px;line-height:6.12px;color:#1a1c1d;white-space:nowrap;">6</span>
<span style="position:absolute;left:545.06px;top:393.34px;font-size:5.1px;line-height:6.12px;color:#1a1c1d;white-space:nowrap;">4</span>
<span style="position:absolute;left:545.06px;top:407.94px;font-size:5.1px;line-height:6.12px;color:#1a1c1d;white-space:nowrap;">2</span>
<span style="position:absolute;left:545.06px;top:422.54px;font-size:5.1px;line-height:6.12px;color:#1a1c1d;white-space:nowrap;">0</span>
<div style="position:absolute;left:550.80px;top:366.90px;width:66.40px;height:0.60px;background:#e3e5e8;"></div>
<div style="position:absolute;left:550.80px;top:381.50px;width:66.40px;height:0.60px;background:#e3e5e8;"></div>
<div style="position:absolute;left:550.80px;top:396.10px;width:66.40px;height:0.60px;background:#e3e5e8;"></div>
<div style="position:absolute;left:550.80px;top:410.70px;width:66.40px;height:0.60px;background:#e3e5e8;"></div>
<div style="position:absolute;left:579.60px;top:377.40px;width:9.60px;height:48.20px;background:#00497a;"></div>
<div style="position:absolute;left:550.80px;top:425.30px;width:66.40px;height:0.80px;background:#7d8389;"></div>
<span style="position:absolute;left:584.40px;top:394.50px;font-size:4.35px;line-height:1;font-weight:bold;color:#fff;white-space:nowrap;transform:translate(-50%,-50%) rotate(-90deg);">6.63 pcs/PC·h</span>
<span style="position:absolute;left:580.79px;top:428.08px;font-size:5.2px;line-height:6.24px;color:#1a1c1d;white-space:nowrap;">9th</span>
<div style="position:absolute;left:624.00px;top:387.00px;width:2.70px;height:2.50px;background:#00497a;border-radius:.4px;"></div>
<span style="position:absolute;left:628.70px;top:377.46px;font-size:4.9px;line-height:5.88px;color:#1a1c1d;white-space:nowrap;">Productivity</span>
<span style="position:absolute;left:628.70px;top:383.36px;font-size:4.9px;line-height:5.88px;color:#1a1c1d;white-space:nowrap;">Direct and</span>
<span style="position:absolute;left:628.70px;top:389.26px;font-size:4.9px;line-height:5.88px;color:#1a1c1d;white-space:nowrap;">Indirect</span>
<span style="position:absolute;left:628.70px;top:395.16px;font-size:4.9px;line-height:5.88px;color:#000;white-space:nowrap;font-weight:bold;">6.63 pcs/PC·h</span>
<div style="position:absolute;left:624.00px;top:402.00px;width:2.70px;height:2.50px;background:#1e9a52;border-radius:.4px;"></div>
<span style="position:absolute;left:628.70px;top:401.16px;font-size:4.9px;line-height:5.88px;color:#1a1c1d;white-space:nowrap;">Target Value –</span>
<div style="position:absolute;left:624.00px;top:411.00px;width:2.70px;height:2.50px;background:#ed0007;border-radius:.4px;"></div>
<span style="position:absolute;left:628.70px;top:407.36px;font-size:4.9px;line-height:5.88px;color:#1a1c1d;white-space:nowrap;">Intervention</span>
<span style="position:absolute;left:628.70px;top:413.26px;font-size:4.9px;line-height:5.88px;color:#1a1c1d;white-space:nowrap;">Limits</span>
</section>
</main>
<footer>
<span style="position:absolute;left:138.40px;top:459.51px;font-size:5.15px;line-height:6.18px;color:#1f2123;white-space:nowrap;letter-spacing:0.035px;">© Robert Bosch Manufacturing Solutions GmbH 2019-2025, all rights reserved</span>
<span style="position:absolute;left:526.60px;top:459.51px;font-size:5.15px;line-height:6.18px;color:#1f2123;white-space:nowrap;letter-spacing:-0.078px;">NEXEED IAS version 2024.02.02</span>
<span style="position:absolute;left:613.60px;top:459.51px;font-size:5.15px;line-height:6.18px;color:#1f2123;white-space:nowrap;letter-spacing:-0.050px;">42e68805-e353-4ab0-a484-acf93cd1ca22</span>
<span style="position:absolute;left:720.20px;top:459.51px;font-size:5.15px;line-height:6.18px;color:#1f2123;white-space:nowrap;letter-spacing:0.043px;">Corporate Information</span>
<span style="position:absolute;left:783.80px;top:459.51px;font-size:5.15px;line-height:6.18px;color:#1f2123;white-space:nowrap;letter-spacing:-0.011px;">Legal Notice</span>
<span style="position:absolute;left:825.00px;top:459.51px;font-size:5.15px;line-height:6.18px;color:#1f2123;white-space:nowrap;letter-spacing:0.012px;">Data Protection Notice</span>
<span style="position:absolute;left:890.00px;top:459.51px;font-size:5.15px;line-height:6.18px;color:#1f2123;white-space:nowrap;letter-spacing:-0.033px;">Privacy Settings</span>
</footer>
</body></html>
